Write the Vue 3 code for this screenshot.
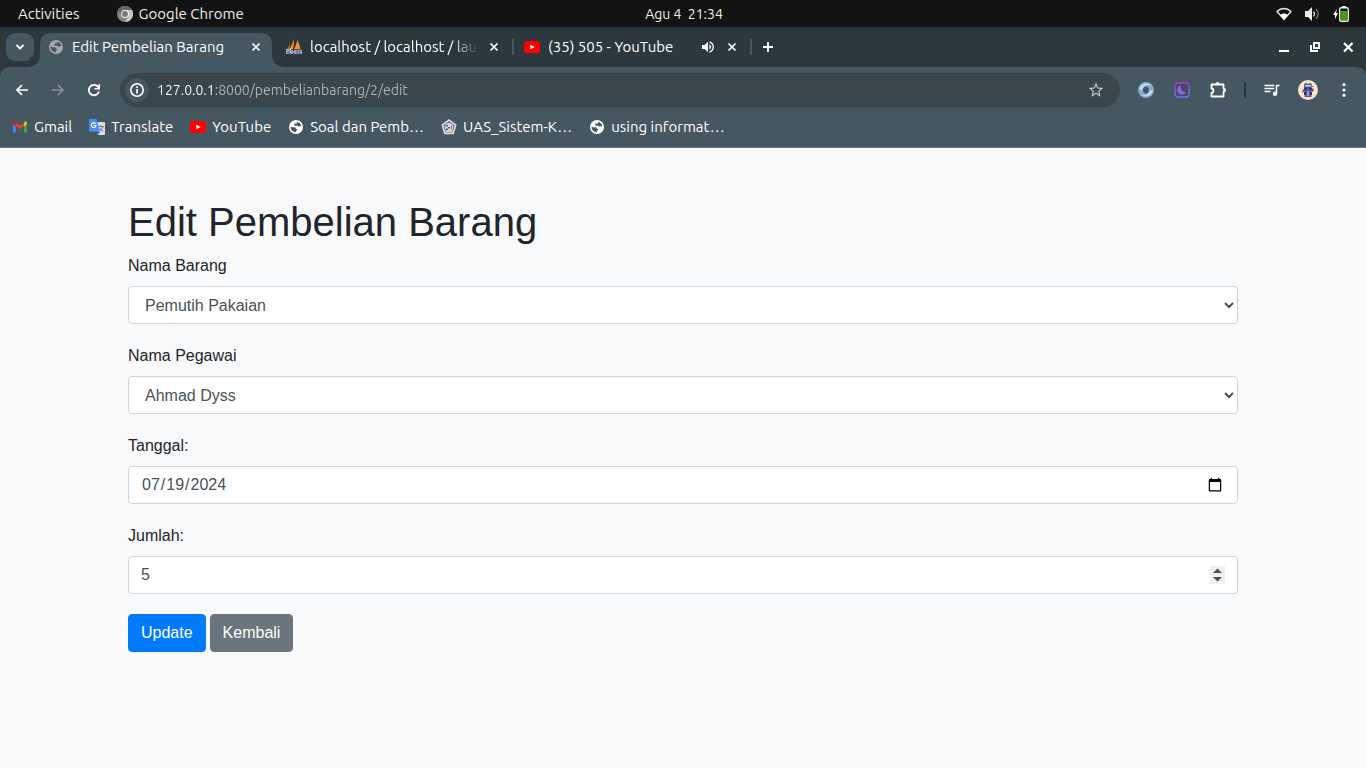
<script setup>
import { ref } from 'vue'

const address = ref('127.0.0.1:8000/pembelianbarang/2/edit')
const barang = ref('Pemutih Pakaian')
const pegawai = ref('Ahmad Dyss')
const tanggal = ref('2024-07-19')
const jumlah = ref(5)

const tabs = [
  { title: 'Edit Pembelian Barang', icon: 'globe', active: true },
  { title: 'localhost / localhost / lau', icon: 'sails', fade: true },
  { title: '(35) 505 - YouTube', icon: 'youtube', audio: true }
]
const bookmarks = [
  { title: 'Gmail', icon: 'gmail' },
  { title: 'Translate', icon: 'translate' },
  { title: 'YouTube', icon: 'youtube' },
  { title: 'Soal dan Pemb…', icon: 'globe' },
  { title: 'UAS_Sistem-K…', icon: 'crest' },
  { title: 'using informat…', icon: 'globe' }
]
</script>

<template>
  <svg class="sprite" aria-hidden="true">
    <symbol id="globe" viewBox="0 0 16 16">
      <path fill="currentColor" fill-rule="evenodd" d="M8 1a7 7 0 1 0 0 14A7 7 0 0 0 8 1ZM9.300 2.700C11.600 3.300 13.300 5.400 13.300 7.600C12.600 6.900 11.900 7.100 11.300 7.400C10.700 7.700 9.900 7.300 9.700 6.800H7.300C6.600 6.800 6.200 6.300 6.200 5.700C6.200 5.100 6.700 4.600 7.300 4.600H7.900C8.700 4.600 9.300 4 9.300 3.300ZM2.700 7.400C3.600 8 4.500 8.300 5.800 8.300C7 8.300 7.900 8.700 8 9.600C8.100 10.200 8.900 10.100 9.100 10.700C9.200 11.500 7.800 11.300 7.800 12.200V13.300C4.900 13.300 2.600 10.800 2.600 8Z" />
    </symbol>
    <symbol id="youtube" viewBox="0 0 16 16">
      <rect y="2" width="16" height="12" rx="3" fill="#f00" /><path fill="#fff" d="m6.300 5.700 4.500 2.300-4.500 2.300z" />
    </symbol>
    <symbol id="sails" viewBox="0 0 16 16">
      <path fill="#f7931e" d="M7.300.5c.7 3 .6 6.500-.3 9.500L2.500 11C5 8 6.500 4.500 7.300.5ZM11 1c2 3 3 6 3.500 9.500L8 10c2-3 2.900-6 3-9ZM4 3c0 3-1 5.500-3.500 8H2c1.600-2 2.300-5 2-8Z" />
      <path d="M1 15v-4h3v2.500H1M6 15v-4M6 13h3M9 11v4M11.500 15v-4M15 11v4M11.500 12.500h3.500" fill="none" stroke="#c9cdef" stroke-width="2" />
      <path d="M1 15v-4h3v2.500H1M6 15v-4M6 13h3M9 11v4M11.500 15v-4M15 11v4M11.500 12.500h3.500" fill="none" stroke="#585d99" stroke-width=".8" />
    </symbol>
    <symbol id="gmail" viewBox="0 0 16 16">
      <path fill="#4285f4" d="M1 4v8.500c0 .5.400 1 1 1h2V6.500z" /><path fill="#34a853" d="M12 6.500v7h2c.6 0 1-.5 1-1V4z" />
      <path fill="#ea4335" d="M3.200 3 8 6.700 12.800 3 13 6 8 10 3 6z" /><path fill="#c5221f" d="M1 4c0-1.400 1.500-1.800 2.400-1L4 3.500v4L1 5.300z" /><path fill="#fbbc04" d="M15 4c0-1.400-1.500-1.800-2.400-1L12 3.500v4l3-2.200z" />
    </symbol>
    <symbol id="translate" viewBox="0 0 16 16">
      <path fill="#dadce0" d="M6 3h9c.6 0 1 .4 1 1v11c0 .6-.4 1-1 1H9z" />
      <path d="M9 7.500h6M12 6v1.500M14 7.500c-.5 2-2 3.500-4 4.500m.5-3c1 1.500 2 2.500 3.500 3.200" fill="none" stroke="#6f7e87" />
      <path fill="#4f8df5" d="M1 0h6.500L11 12.500H1c-.6 0-1-.4-1-1V1c0-.6.400-1 1-1z" /><path fill="#2962c4" d="M7.500 12.500H11L8.900 16z" />
      <path d="M6.600 4.800A2.300 2.300 0 1 0 7 6.500H4.900" fill="none" stroke="#fff" stroke-width="1.100" />
    </symbol>
    <symbol id="crest" viewBox="0 0 16 16">
      <path d="m8 1 6.700 5-2.500 8.500H3.800L1.300 6z" fill="#6876a1" stroke="#e3e4e2" stroke-width="1.500" />
      <circle cx="8" cy="8.300" r="4.200" fill="#d5d9e2" /><path d="M5 6h2v1.500H5zM7 8h2v1.500H7zM5 9.500h2V11H5z" fill="#3e58a4" /><path d="M10.500 7v3" stroke="#b64d46" /><path d="M4.500 12.500h7" stroke="#e5d6a2" stroke-width="1.500" />
    </symbol>
    <symbol id="close" viewBox="0 0 16 16"><path d="m4.500 4.500 7 7m0-7-7 7" fill="none" stroke="currentColor" stroke-width="1.700" /></symbol>
  </svg>

  <div class="screen">
    <header class="system-bar">
      <div class="system-left">
        <button>Activities</button>
        <button class="app-menu">
          <svg width="16" height="16" viewBox="0 0 16 16"><circle cx="8" cy="8" r="8" fill="#858585" /><path fill="#c6c6c6" d="M8 4h7a8 8 0 0 1-7 12l3.500-6z" /><path fill="#666" d="M1.100 4A8 8 0 0 1 15 4H8L4.500 10z" /><circle cx="8" cy="8" r="4" fill="#eee" /><circle cx="8" cy="8" r="2.900" fill="#777" /></svg>
          Google Chrome
        </button>
      </div>
      <time>Agu 4&nbsp; 21:34</time>
      <div class="system-tray">
        <svg width="16" height="14" viewBox="0 0 16 14"><path d="M1 4.500c4-4 10-4 14 0L8 12.500z" fill="none" stroke="#eee" stroke-width="1.300" /><path d="M4.300 8c2-2 5.400-2 7.400 0L8 12.500z" fill="#fff" /></svg>
        <svg width="16" height="16" viewBox="0 0 16 16"><path fill="#eee" d="M1 5h3l4-4v14l-4-4H1z" /><path d="M9.500 5.500c1.300 1.500 1.300 3.500 0 5" fill="none" stroke="#ddd" stroke-width="1.200" /><path d="M12 3c2.600 3 2.600 7 0 10" fill="none" stroke="#777" stroke-width="1.200" /></svg>
        <svg width="18" height="16" viewBox="0 0 18 16"><path fill="#fff" d="M5 3 1 9h2v4l3-6H4z" /><path fill="#eee" d="M10 0h4v2h-4z" /><rect x="7.700" y="1.700" width="8.600" height="13.600" rx="1.500" fill="#131313" stroke="#eee" stroke-width="1.400" /><path fill="#4e9a06" d="M9 5h6v9H9z" /></svg>
      </div>
    </header>

    <div class="tab-strip">
      <button class="tab-search" aria-label="Search tabs"><svg width="16" height="16" viewBox="0 0 16 16"><path d="m4.500 6 3.500 3.500L11.500 6" fill="none" stroke="currentColor" stroke-width="1.900" /></svg></button>
      <div v-for="tab in tabs" :key="tab.title" class="tab" :class="{ active: tab.active }">
        <svg class="favicon"><use :href="'#' + tab.icon" /></svg>
        <span class="tab-title" :class="{ fade: tab.fade }">{{ tab.title }}</span>
        <svg v-if="tab.audio" class="favicon" viewBox="0 0 24 24"><path fill="currentColor" d="M3 9v6h4l5 5V4L7 9H3zm13.500 3c0-1.770-1.020-3.290-2.500-4.030v8.050c1.480-.73 2.500-2.250 2.500-4.020zM14 3.230v2.060c2.890.86 5 3.540 5 6.710s-2.110 5.850-5 6.710v2.060c4.010-.91 7-4.490 7-8.770s-2.990-7.860-7-8.770z" /></svg>
        <button :aria-label="'Close ' + tab.title"><svg class="favicon"><use href="#close" /></svg></button>
      </div>
      <button class="new-tab" aria-label="New tab"><svg width="16" height="16" viewBox="0 0 16 16"><path d="M8 3v10M3 8h10" stroke="currentColor" stroke-width="1.800" /></svg></button>
      <div class="window-buttons">
        <button aria-label="Minimize"><svg width="16" height="16" viewBox="0 0 16 16"><path d="M3 11h10v2H3z" fill="currentColor" /></svg></button>
        <button aria-label="Restore"><svg width="16" height="16" viewBox="0 0 16 16"><path d="M6 4h5v5H6zM3 6v6h7" fill="none" stroke="currentColor" stroke-width="2" /></svg></button>
        <button aria-label="Close window"><svg width="16" height="16" viewBox="0 0 16 16"><path d="m4 4 8.500 8.500m0-8.500L4 12.500" stroke="currentColor" stroke-width="2.200" /></svg></button>
      </div>
    </div>

    <div class="chrome-panel">
      <div class="toolbar">
        <div class="nav">
          <button aria-label="Back"><svg width="16" height="16" viewBox="0 0 16 16"><path d="M14 8H3m5-5L3 8l5 5" fill="none" stroke="currentColor" stroke-width="1.700" /></svg></button>
          <button aria-label="Forward" disabled><svg width="16" height="16" viewBox="0 0 16 16"><path d="M2 8h11M8 3l5 5-5 5" fill="none" stroke="currentColor" stroke-width="1.700" /></svg></button>
          <button aria-label="Reload"><svg width="16" height="16" viewBox="0 0 16 16"><path d="M13 9.500A5.200 5.200 0 1 1 12 4.700L13 6" fill="none" stroke="currentColor" stroke-width="1.800" /><path d="M14 2v5.500H8.500V6h4V2z" fill="currentColor" /></svg></button>
        </div>
        <div class="omnibox">
          <button class="site-info" aria-label="Site information"><svg width="16" height="16" viewBox="0 0 16 16"><circle cx="8" cy="8" r="6.200" fill="none" stroke="currentColor" stroke-width="1.600" /><path d="M7.200 7h1.700v4.500H7.200zm0-2.700h1.700v1.600H7.200z" fill="currentColor" /></svg></button>
          <input v-model="address" class="address" aria-label="Address" spellcheck="false" />
          <button class="star" aria-label="Bookmark this page"><svg width="18" height="18" viewBox="0 0 24 24"><path fill="currentColor" d="M22 9.240l-7.190-.62L12 2 9.190 8.630 2 9.240l5.460 4.730L5.820 21 12 17.270 18.180 21l-1.630-7.030L22 9.240zM12 15.400l-3.760 2.270 1-4.280-3.320-2.880 4.380-.38L12 6.100l1.710 4.040 4.380.38-3.320 2.880 1 4.280L12 15.400z" /></svg></button>
        </div>
        <div class="extensions">
          <button aria-label="Swirl extension"><svg width="16" height="16" viewBox="0 0 16 16"><circle cx="8" cy="8" r="5.500" fill="none" stroke="#86a7cb" stroke-width="5" /><path d="M1 7C3 1 10 0 14 4 10 2 5 3 4.500 8M15 9c-2 6-9 7-13 3 4 2 9 1 9.500-4" fill="#c4dcf1" /><ellipse cx="8" cy="8" rx="2.600" ry="3.500" fill="#455760" /></svg></button>
          <button aria-label="Night mode extension"><svg width="16" height="16" viewBox="0 0 16 16"><defs><linearGradient id="night" x2="0" y2="1"><stop stop-color="#bd32d6" /><stop offset="1" stop-color="#5a83ed" /></linearGradient></defs><rect x="1" y="1" width="14" height="14" rx="3" fill="#454a66" stroke="url(#night)" stroke-width="1.300" /><path fill="#8b63ef" d="M7 3.500a4.600 4.600 0 1 0 5 6.500C8.500 11 5.500 7.500 7 3.500z" /></svg></button>
          <button aria-label="Extensions"><svg width="18" height="18" viewBox="0 0 18 18"><path d="M2.500 3.500h12v4c1.500 0 1.500 3.500 0 3.500v4.500h-12V12c2.500 0 2.500-4.500 0-4.500z" fill="none" stroke="currentColor" stroke-width="1.800" stroke-linejoin="round" /><path fill="currentColor" d="M6.500 3.500V3a2 2 0 0 1 4 0v.5zM14.500 7.300h.5a2 2 0 0 1 0 4h-.5z" /></svg></button>
          <span class="separator"></span>
          <button aria-label="Media controls"><svg width="18" height="18" viewBox="0 0 24 24"><path fill="currentColor" d="M15 5H2v2h13V5zm0 4H2v2h13V9zM2 15h8v-2H2v2zM17 5v9.180c-.31-.11-.65-.18-1-.18-1.660 0-3 1.340-3 3s1.340 3 3 3 3-1.340 3-3V7h3V5h-5z" /></svg></button>
          <button aria-label="Profile"><svg width="20" height="20" viewBox="0 0 20 20"><circle cx="10" cy="10" r="10" fill="#fbe4c5" /><path fill="#5b5794" d="M6 4 8 3l2 1 3-1 1 2-1 3 3 1-1 3-2-.5.500 5.500h-7l.5-5-3 .5 1-3 2-1L6 7z" /><path fill="#b7dcef" d="M7 5h6v1.500H7zM9.500 11h1v5h-1z" /><path fill="#292f68" d="M6 7.500h3v2H6zM11 7.500h3v2h-3zM6 12h2v3H6zM12 12h2v3h-2z" /><path d="m13 7 3-1" stroke="#d95f36" /></svg></button>
          <button aria-label="Menu"><svg width="16" height="16" viewBox="0 0 16 16"><g fill="currentColor"><circle cx="8" cy="2.700" r="1.600" /><circle cx="8" cy="8" r="1.600" /><circle cx="8" cy="13.300" r="1.600" /></g></svg></button>
        </div>
      </div>
      <nav class="bookmarks">
        <a v-for="mark in bookmarks" :key="mark.title" href="#"><svg class="favicon"><use :href="'#' + mark.icon" /></svg>{{ mark.title }}</a>
      </nav>
    </div>

    <main>
      <form class="container" @submit.prevent>
        <h1>Edit Pembelian Barang</h1>
        <div class="group">
          <label for="barang">Nama Barang</label>
          <select id="barang" v-model="barang" class="control"><option>Pemutih Pakaian</option></select>
        </div>
        <div class="group">
          <label for="pegawai">Nama Pegawai</label>
          <select id="pegawai" v-model="pegawai" class="control"><option>Ahmad Dyss</option></select>
        </div>
        <div class="group">
          <label for="tanggal">Tanggal:</label>
          <input id="tanggal" v-model="tanggal" type="date" class="control" />
        </div>
        <div class="group">
          <label for="jumlah">Jumlah:</label>
          <input id="jumlah" v-model="jumlah" type="number" class="control" />
        </div>
        <div class="actions">
          <button type="submit" class="btn primary">Update</button>
          <a href="#" class="btn secondary">Kembali</a>
        </div>
      </form>
    </main>
  </div>
</template>

<style>
body { margin: 0; background: #f8f9fb; }
</style>

<style scoped>
* { box-sizing: border-box; }
.sprite { position: absolute; width: 0; height: 0; }
.screen { min-height: 100vh; display: flex; flex-direction: column; font: 15px/20px Ubuntu, "Noto Sans", sans-serif; color: #fff; background: #f8f9fb; }
button { font: inherit; color: inherit; background: none; border: 0; padding: 0; }
svg { display: block; flex: none; }
.favicon { width: 16px; height: 16px; }

.system-bar { height: 27px; display: grid; grid-template-columns: 1fr auto 1fr; align-items: center; background: #131313; color: #eee; padding: 0 16px 0 18px; }
.system-bar time { font-size: 14px; }
.system-left { display: flex; gap: 37px; }
.app-menu { display: flex; align-items: center; gap: 6px; }
.system-tray { display: flex; align-items: center; justify-content: flex-end; gap: 12px; }

.tab-strip { height: 40px; display: flex; align-items: flex-start; padding: 6px 10px 0 6px; background: #2d383e; }
.tab-search { width: 28px; height: 28px; margin-right: 6px; display: grid; place-items: center; border-radius: 9px; background: #455760; }
.tab { position: relative; width: 232px; height: 34px; margin-right: 6px; padding: 0 8px 6px; display: flex; align-items: center; gap: 8px; border-radius: 10px 10px 0 0; }
.tab.active { background: #455760; }
.tab.active > .favicon { color: #a4a9ae; }
.tab.active::before, .tab.active::after { content: ""; position: absolute; bottom: 0; width: 10px; height: 10px; }
.tab.active::before { left: -10px; background: radial-gradient(circle at 0 0, #2d383e 9px, #455760 10px); }
.tab.active::after { right: -10px; background: radial-gradient(circle at 100% 0, #2d383e 9px, #455760 10px); }
.tab:not(.active)::after { content: ""; position: absolute; right: -4px; top: 6px; width: 2px; height: 16px; background: #455760; }
.tab-title { flex: 1; min-width: 0; white-space: nowrap; }
.tab-title.fade { mask-image: linear-gradient(90deg, #000 calc(100% - 26px), transparent); }
.new-tab { height: 28px; margin-left: 6px; }
.window-buttons { height: 28px; margin-left: auto; display: flex; align-items: center; gap: 16px; }

.chrome-panel { position: relative; background: #455760; border-bottom: 1px solid #6a7880; }
.chrome-panel::before, .chrome-panel::after { content: ""; position: absolute; top: 0; width: 8px; height: 8px; }
.chrome-panel::before { left: 0; background: radial-gradient(circle at 100% 100%, #455760 7px, #2d383e 8px); }
.chrome-panel::after { right: 0; background: radial-gradient(circle at 0 100%, #455760 7px, #2d383e 8px); }
.toolbar { display: flex; align-items: center; padding: 6px 12px 0 14px; }
.nav { display: flex; gap: 20px; }
.nav button:disabled { color: #87939a; }
.omnibox { flex: 1; height: 34px; margin: 0 16px 0 18px; display: flex; align-items: center; border-radius: 17px; background: #39464c; padding: 0 15px 0 5px; }
.site-info { width: 24px; height: 24px; display: grid; place-items: center; border-radius: 12px; background: #455760; }
.address { flex: 1; min-width: 0; height: 24px; margin-left: 8px; padding: 0; border: 0; outline: 0; font: inherit; font-size: 14px; color: transparent; background: linear-gradient(90deg, #fff 57px, #adb5b9 57px); background-clip: text; -webkit-background-clip: text; }
.star { color: #bdc3c6; }
.extensions { display: flex; align-items: center; gap: 16px; }
.extensions button { width: 20px; display: grid; place-items: center; }
.separator { width: 2px; height: 16px; background: #2d383e; }
.bookmarks { height: 40px; display: flex; align-items: center; gap: 17px; padding: 0 12px; }
.bookmarks a { display: flex; align-items: center; gap: 6px; color: #fff; text-decoration: none; white-space: nowrap; }

main { flex: 1; color: #212529; font: 16px/24px "Liberation Sans", Arial, sans-serif; }
.container { width: 100%; max-width: 1140px; margin: 0 auto; padding: 50px 15px; }
h1 { margin: 0 0 8px; font-size: 40px; line-height: 48px; font-weight: 500; }
.group { margin-bottom: 20px; }
label { display: block; margin-bottom: 8px; }
.control { display: block; width: 100%; height: 38px; padding: 6px 12px; font: inherit; color: #495057; background: #fff; border: 1px solid #ced4da; border-radius: 4px; }
.control::-webkit-inner-spin-button {
  appearance: none;
  -webkit-appearance: none;
  width: 15px;
  height: 18px;
  opacity: 1;
  background: #efefef url("data:image/svg+xml,%3Csvg xmlns='http://www.w3.org/2000/svg' width='15' height='18'%3E%3Cpath fill='%23505050' d='M3 7l4.500-4.500L12 7zM3 11h9l-4.500 4.500z'/%3E%3C/svg%3E") center no-repeat;
}
.actions { display: flex; gap: 4px; }
.btn { padding: 6px 12px; border: 1px solid; border-radius: 4px; color: #fff; text-decoration: none; }
.primary { background: #007bff; border-color: #007bff; }
.secondary { background: #6c757d; border-color: #6c757d; }
</style>
